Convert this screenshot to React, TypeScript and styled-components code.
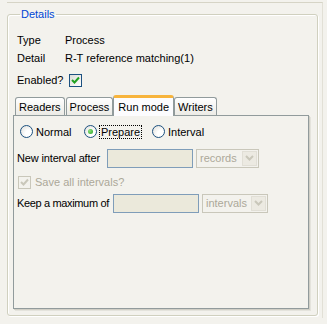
import React from "react";
import styled, { createGlobalStyle, css } from "styled-components";

const Global = createGlobalStyle`
  html, body { margin: 0; padding: 0; background: #f3f2ed; }
  body { font-family: "Liberation Sans", Arial, sans-serif; font-size: 11px; color: #000; }
`;

const Page = styled.div`
  width: 327px;
  height: 324px;
  box-sizing: border-box;
  padding: 2px 4px 0 7px;
`;

const Frame = styled.div`
  height: 316px;
  border-top: 1px solid #d6d4c6;
  border-right: 1px solid #e2e0d6;
  box-sizing: border-box;
  padding-top: 5px;
`;

const Group = styled.fieldset`
  margin: 0;
  padding: 0 5px 0 5px;
  height: 308px;
  width: 311px;
  box-sizing: border-box;
  border: 1px solid #d0d0bf;
  border-radius: 3px;
  box-shadow: inset 1px 1px 0 #fff, 1px 1px 0 #fff;
  display: block;
  overflow: hidden;
`;

const Legend = styled.legend`
  color: #0046d5;
  padding: 0 1px;
  margin-left: 7px;
  font-size: 11px;
`;

const InfoRow = styled.div`
  display: flex;
  align-items: center;
  height: 18px;
  padding-left: 4px;
`;

const InfoLabel = styled.span`
  width: 48px;
`;

const InfoList = styled.div`
  display: flex;
  flex-direction: column;
  margin-top: 11px;
`;

const EnabledRow = styled.div`
  display: flex;
  align-items: center;
  gap: 5px;
  height: 20px;
  padding-left: 4px;
  margin-top: 3px;
`;

const Box = styled.span<{ $disabled?: boolean }>`
  width: 13px;
  height: 13px;
  box-sizing: border-box;
  border: 1px solid ${(p) => (p.$disabled ? "#c9c7ba" : "#1c5180")};
  background: ${(p) => (p.$disabled ? "#f3f2ed" : "linear-gradient(135deg, #dcdcd7, #ffffff)")};
  display: inline-flex;
  align-items: center;
  justify-content: center;
`;

const Tabs = styled.div`
  margin-top: 4px;
  display: flex;
  flex-direction: column;
`;

const TabStrip = styled.div`
  display: flex;
  align-items: flex-end;
  padding-left: 2px;
  height: 21px;
  position: relative;
  z-index: 1;
`;

const Tab = styled.div<{ $active?: boolean }>`
  box-sizing: border-box;
  height: 18px;
  padding: 0 3px;
  display: flex;
  align-items: center;
  border: 1px solid #919b9c;
  border-bottom: none;
  border-radius: 3px 3px 0 0;
  background: linear-gradient(#ffffff, #ecebe6);
  margin-right: 1px;
  ${(p) =>
    p.$active &&
    css`
      height: 21px;
      margin: 0 0 -1px -1px;
      padding: 0 4px 1px 4px;
      background: #fcfcfe;
      border-top: 3px solid #f7b43c;
      border-radius: 3px 3px 0 0;
    `}
`;

const Panel = styled.div`
  height: 194px;
  box-sizing: border-box;
  border: 1px solid #919b9c;
  box-shadow: 1px 1px 0 #d0cfc6, 2px 2px 0 #e4e3dc;
  background: #f3f2ed;
  margin-right: 3px;
  padding: 6px 0 0 3px;
  display: flex;
  flex-direction: column;
`;

const RadioRow = styled.div`
  display: flex;
  align-items: center;
  height: 19px;
  padding-left: 3px;
`;

const RadioItem = styled.label<{ $w: number }>`
  display: flex;
  align-items: center;
  gap: 3px;
  width: ${(p) => p.$w}px;
`;

const RadioCircle = styled.span<{ $on?: boolean }>`
  width: 13px;
  height: 13px;
  box-sizing: border-box;
  border-radius: 50%;
  border: 1px solid #1c5180;
  background: radial-gradient(circle at 70% 70%, #ffffff 30%, #dcdcd7);
  display: inline-flex;
  align-items: center;
  justify-content: center;
  &::after {
    content: "";
    display: ${(p) => (p.$on ? "block" : "none")};
    width: 5px;
    height: 5px;
    border-radius: 50%;
    background: radial-gradient(circle at 35% 35%, #8ee07a, #21a121);
  }
`;

const Focus = styled.span`
  outline: 1px dotted #000;
  outline-offset: 0px;
  padding: 0 1px;
`;

const FieldRow = styled.div<{ $top: number }>`
  display: flex;
  align-items: center;
  height: 20px;
  gap: 3px;
  margin-top: ${(p) => p.$top}px;
`;

const FieldLabel = styled.span<{ $w: number; $ls: number }>`
  width: ${(p) => p.$w}px;
  flex-shrink: 0;
  white-space: nowrap;
  letter-spacing: ${(p) => p.$ls}px;
`;

const TextBox = styled.div`
  width: 86px;
  height: 19px;
  box-sizing: border-box;
  border: 1px solid #7f9db9;
  background: #ebe9db;
`;

const Combo = styled.div<{ $w: number }>`
  width: ${(p) => p.$w}px;
  height: 19px;
  box-sizing: border-box;
  border: 1px solid #c9c7ba;
  background: #f3f2ed;
  color: #aca899;
  display: flex;
  align-items: center;
  padding: 0 1px 0 3px;
  justify-content: space-between;
`;

const ComboBtn = styled.span`
  width: 15px;
  height: 15px;
  box-sizing: border-box;
  background: #eceae2;
  border: 1px solid #e1dfd6;
  display: inline-flex;
  align-items: center;
  justify-content: center;
`;

const SaveRow = styled.div`
  display: flex;
  align-items: center;
  gap: 4px;
  height: 16px;
  margin-top: 6px;
  color: #aca899;
  padding-left: 1px;
`;

const Check = ({ color }: { color: string }) => (
  <svg width="9" height="9" viewBox="0 0 9 9">
    <path d="M1 4 L3.5 6.5 L8 1.5" stroke={color} strokeWidth="2" fill="none" />
  </svg>
);

const Arrow = () => (
  <svg width="9" height="6" viewBox="0 0 9 6">
    <path d="M1 1 L4.5 4.5 L8 1" stroke="#c9c7ba" strokeWidth="2" fill="none" />
  </svg>
);

export default function App() {
  return (
    <>
      <Global />
      <Page>
        <Frame>
          <Group>
            <Legend>Details</Legend>
            <InfoList>
              <InfoRow>
                <InfoLabel>Type</InfoLabel>
                <span>Process</span>
              </InfoRow>
              <InfoRow>
                <InfoLabel>Detail</InfoLabel>
                <span>R-T reference matching(1)</span>
              </InfoRow>
            </InfoList>
            <EnabledRow>
              <span>Enabled?</span>
              <Box>
                <Check color="#21a121" />
              </Box>
            </EnabledRow>
            <Tabs>
              <TabStrip>
                <Tab>Readers</Tab>
                <Tab>Process</Tab>
                <Tab $active>Run mode</Tab>
                <Tab>Writers</Tab>
              </TabStrip>
              <Panel>
                <RadioRow>
                  <RadioItem $w={64}>
                    <RadioCircle />
                    <span>Normal</span>
                  </RadioItem>
                  <RadioItem $w={68}>
                    <RadioCircle $on />
                    <Focus>Prepare</Focus>
                  </RadioItem>
                  <RadioItem $w={70}>
                    <RadioCircle />
                    <span>Interval</span>
                  </RadioItem>
                </RadioRow>
                <FieldRow $top={7}>
                  <FieldLabel $w={87} $ls={-0.15}>New interval after</FieldLabel>
                  <TextBox />
                  <Combo $w={63}>
                    <span>records</span>
                    <ComboBtn>
                      <Arrow />
                    </ComboBtn>
                  </Combo>
                </FieldRow>
                <SaveRow>
                  <Box $disabled>
                    <Check color="#c9c7ba" />
                  </Box>
                  <span>Save all intervals?</span>
                </SaveRow>
                <FieldRow $top={3}>
                  <FieldLabel $w={93} $ls={-0.35}>Keep a maximum of</FieldLabel>
                  <TextBox />
                  <Combo $w={66}>
                    <span>intervals</span>
                    <ComboBtn>
                      <Arrow />
                    </ComboBtn>
                  </Combo>
                </FieldRow>
              </Panel>
            </Tabs>
          </Group>
        </Frame>
      </Page>
    </>
  );
}
